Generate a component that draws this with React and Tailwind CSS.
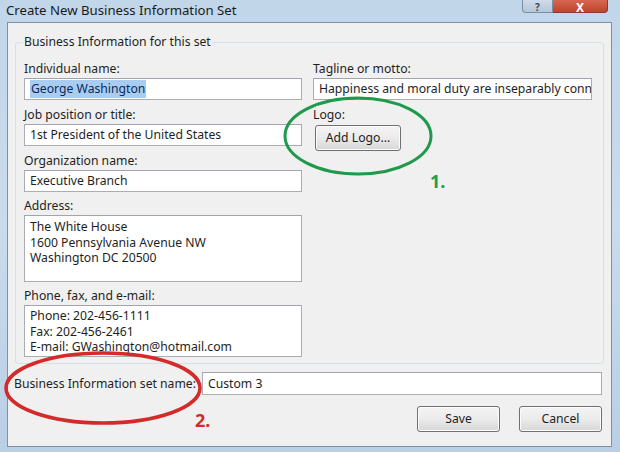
import React from 'react';

const font = { fontFamily: '"Noto Sans", "Open Sans", Arial, sans-serif' };

function Label({ children, className = '' }) {
  return <div className={`h-[19px] flex items-center text-[12.2px] text-[#1e1e1e] ${className}`}>{children}</div>;
}

function Box({ children, className = '' }) {
  return (
    <div className={`bg-white border border-[#abadb3] border-t-[#a0a4ac] px-[5px] text-[12.2px] text-[#1e1e1e] whitespace-nowrap overflow-hidden ${className}`}>
      {children}
    </div>
  );
}

function Btn({ children, className = '' }) {
  return (
    <button className={`h-[26px] rounded-[3px] border border-[#707070] bg-gradient-to-b from-[#f4f4f4] via-[#ebebeb] to-[#d7d7d7] text-[12.2px] text-[#1e1e1e] shadow-[inset_0_0_0_1px_#fcfcfc] ${className}`}>
      {children}
    </button>
  );
}

export default function App() {
  return (
    <div style={font} className="relative w-[620px] h-[452px] overflow-hidden bg-gradient-to-b from-[#c2d6ea] via-[#c9dbed] to-[#b9cfe6] flex flex-col">
      {/* title bar */}
      <div className="h-[22px] flex items-start justify-between pl-[6px] pr-[12px] shrink-0">
        <div className="text-[13.2px] text-[#1a1a1a] leading-[20px]">Create New Business Information Set</div>
        <div className="flex">
          <div className="w-[31px] h-[13px] rounded-bl-[4px] border border-t-0 border-[#7b8ea5] bg-gradient-to-b from-[#cfdbe8] to-[#b5c6d9] flex items-end justify-center text-[10px] leading-[10px] text-[#3b4a5e] font-bold overflow-hidden">?</div>
          <div className="w-[55px] h-[13px] rounded-br-[4px] border border-t-0 border-l-0 border-[#8a3a30] bg-gradient-to-b from-[#d66650] to-[#c2412f] flex items-end justify-center text-[12px] leading-[9px] text-white font-bold overflow-hidden">X</div>
        </div>
      </div>

      {/* client area */}
      <div className="ml-[7px] mr-[8px] mb-[5px] flex-1 bg-[#f0f0f0] border border-[#7d91a8] flex flex-col">
        <fieldset className="mx-[7px] mt-[10px] border border-[#d5dfe5] rounded-[3px] px-[8px] pb-[6px]">
          <legend className="px-[1px] -ml-[1px] text-[12.2px] text-[#1e1e1e]">Business Information for this set</legend>
          <div className="flex gap-[11px] pt-[8px]">
            <div className="w-[278px] flex flex-col">
              <Label>Individual name:</Label>
              <Box className="h-[22px] flex items-center">
                <span className="bg-[#a9cdf0] text-[#0a2a5a] px-[1px]">George Washington</span>
              </Box>
              <Label className="mt-[5px]">Job position or title:</Label>
              <Box className="h-[22px] flex items-center">1st President of the United States</Box>
              <Label className="mt-[5px]">Organization name:</Label>
              <Box className="h-[22px] flex items-center">Executive Branch</Box>
              <Label className="mt-[4px]">Address:</Label>
              <Box className="h-[67px] pt-[3px] leading-[15.5px]">
                <div>The White House</div>
                <div>1600 Pennsylvania Avenue NW</div>
                <div>Washington DC 20500</div>
              </Box>
              <Label className="mt-[4px]">Phone, fax, and e-mail:</Label>
              <Box className="h-[52px] pt-[2px] leading-[15.5px]">
                <div>Phone: 202-456-1111</div>
                <div>Fax: 202-456-2461</div>
                <div>E-mail: GWashington@hotmail.com</div>
              </Box>
            </div>
            <div className="w-[279px] flex flex-col">
              <Label>Tagline or motto:</Label>
              <Box className="h-[22px] flex items-center">Happiness and moral duty are inseparably connected</Box>
              <Label className="mt-[5px]">Logo:</Label>
              <div>
                <Btn className="w-[86px] ml-[2px]">Add Logo...</Btn>
              </div>
            </div>
          </div>
        </fieldset>

        <div className="flex items-center mt-[8px] ml-[6px] mr-[9px] h-[23px]">
          <div className="text-[12.2px] text-[#1e1e1e] w-[188px] whitespace-nowrap">Business Information set name:</div>
          <Box className="flex-1 h-[23px] flex items-center">Custom 3</Box>
        </div>

        <div className="flex justify-end gap-[19px] mt-[11px] mr-[9px]">
          <Btn className="w-[83px]">Save</Btn>
          <Btn className="w-[83px]">Cancel</Btn>
        </div>
      </div>

      {/* annotations */}
      <svg className="absolute inset-0 pointer-events-none" width="620" height="452">
        <ellipse cx="358" cy="136" rx="73" ry="38" fill="none" stroke="#1f9a4c" strokeWidth="3" />
        <ellipse cx="103" cy="388" rx="97" ry="35" fill="none" stroke="#d42a2a" strokeWidth="3.5" />
      </svg>
      <div className="absolute left-[430px] top-[168px] text-[18px] font-bold text-[#22a04f]">1.</div>
      <div className="absolute left-[195px] top-[407px] text-[18px] font-bold text-[#d42a2a]">2.</div>
    </div>
  );
}
